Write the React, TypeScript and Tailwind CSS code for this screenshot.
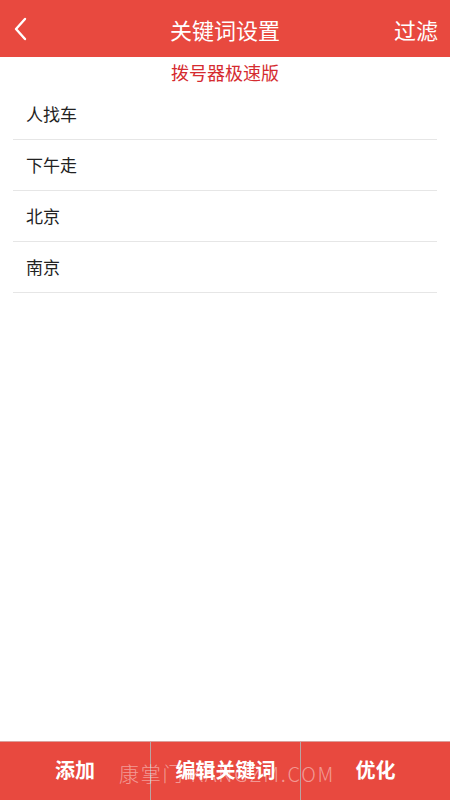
import React from "react";

const keywords = ["人找车", "下午走", "北京", "南京"];

export default function App() {
  return (
    <div
      className="relative flex h-[800px] w-[450px] flex-col bg-white"
      style={{ fontFamily: '"Noto Sans CJK SC", "Noto Sans", sans-serif' }}
    >
      <header className="grid h-[57px] shrink-0 grid-cols-[1fr_auto_1fr] items-center bg-[#e8493f] px-[12px] text-white">
        <svg width="14" height="24" viewBox="0 0 14 24" fill="none" className="ml-[1px]">
          <path d="M12 2 L3 12 L12 22" stroke="white" strokeWidth="2.4" strokeLinecap="round" strokeLinejoin="round" />
        </svg>
        <h1 className="text-[22px] leading-none">关键词设置</h1>
        <span className="justify-self-end text-[22px] leading-none">过滤</span>
      </header>

      <p className="mt-[2px] text-center text-[18px] leading-[26px] text-[#d52b2f]">拨号器极速版</p>

      <ul className="mx-[13px] mt-[4px]">
        {keywords.map((k) => (
          <li key={k} className="flex h-[51px] items-center border-b border-[#e6e6e6] pl-[13px] text-[17px] text-[#222]">
            {k}
          </li>
        ))}
      </ul>

      <div className="flex-1" />

      <footer className="grid h-[59px] shrink-0 grid-cols-3 border-t border-[#d9a09c] bg-[#e8493f] text-[20px] font-bold text-white">
        <button className="flex items-center justify-center pb-[2px]">添加</button>
        <button className="flex items-center justify-center border-l border-[#b8a4a2] pb-[2px]">编辑关键词</button>
        <button className="flex items-center justify-center border-l border-[#b8a4a2] pb-[2px]">优化</button>
      </footer>

      <div className="pointer-events-none absolute left-[119px] top-[764px] text-[20px] font-light leading-none tracking-[1.8px] text-white/45">
        康掌门 KANGZM.COM
      </div>
    </div>
  );
}
